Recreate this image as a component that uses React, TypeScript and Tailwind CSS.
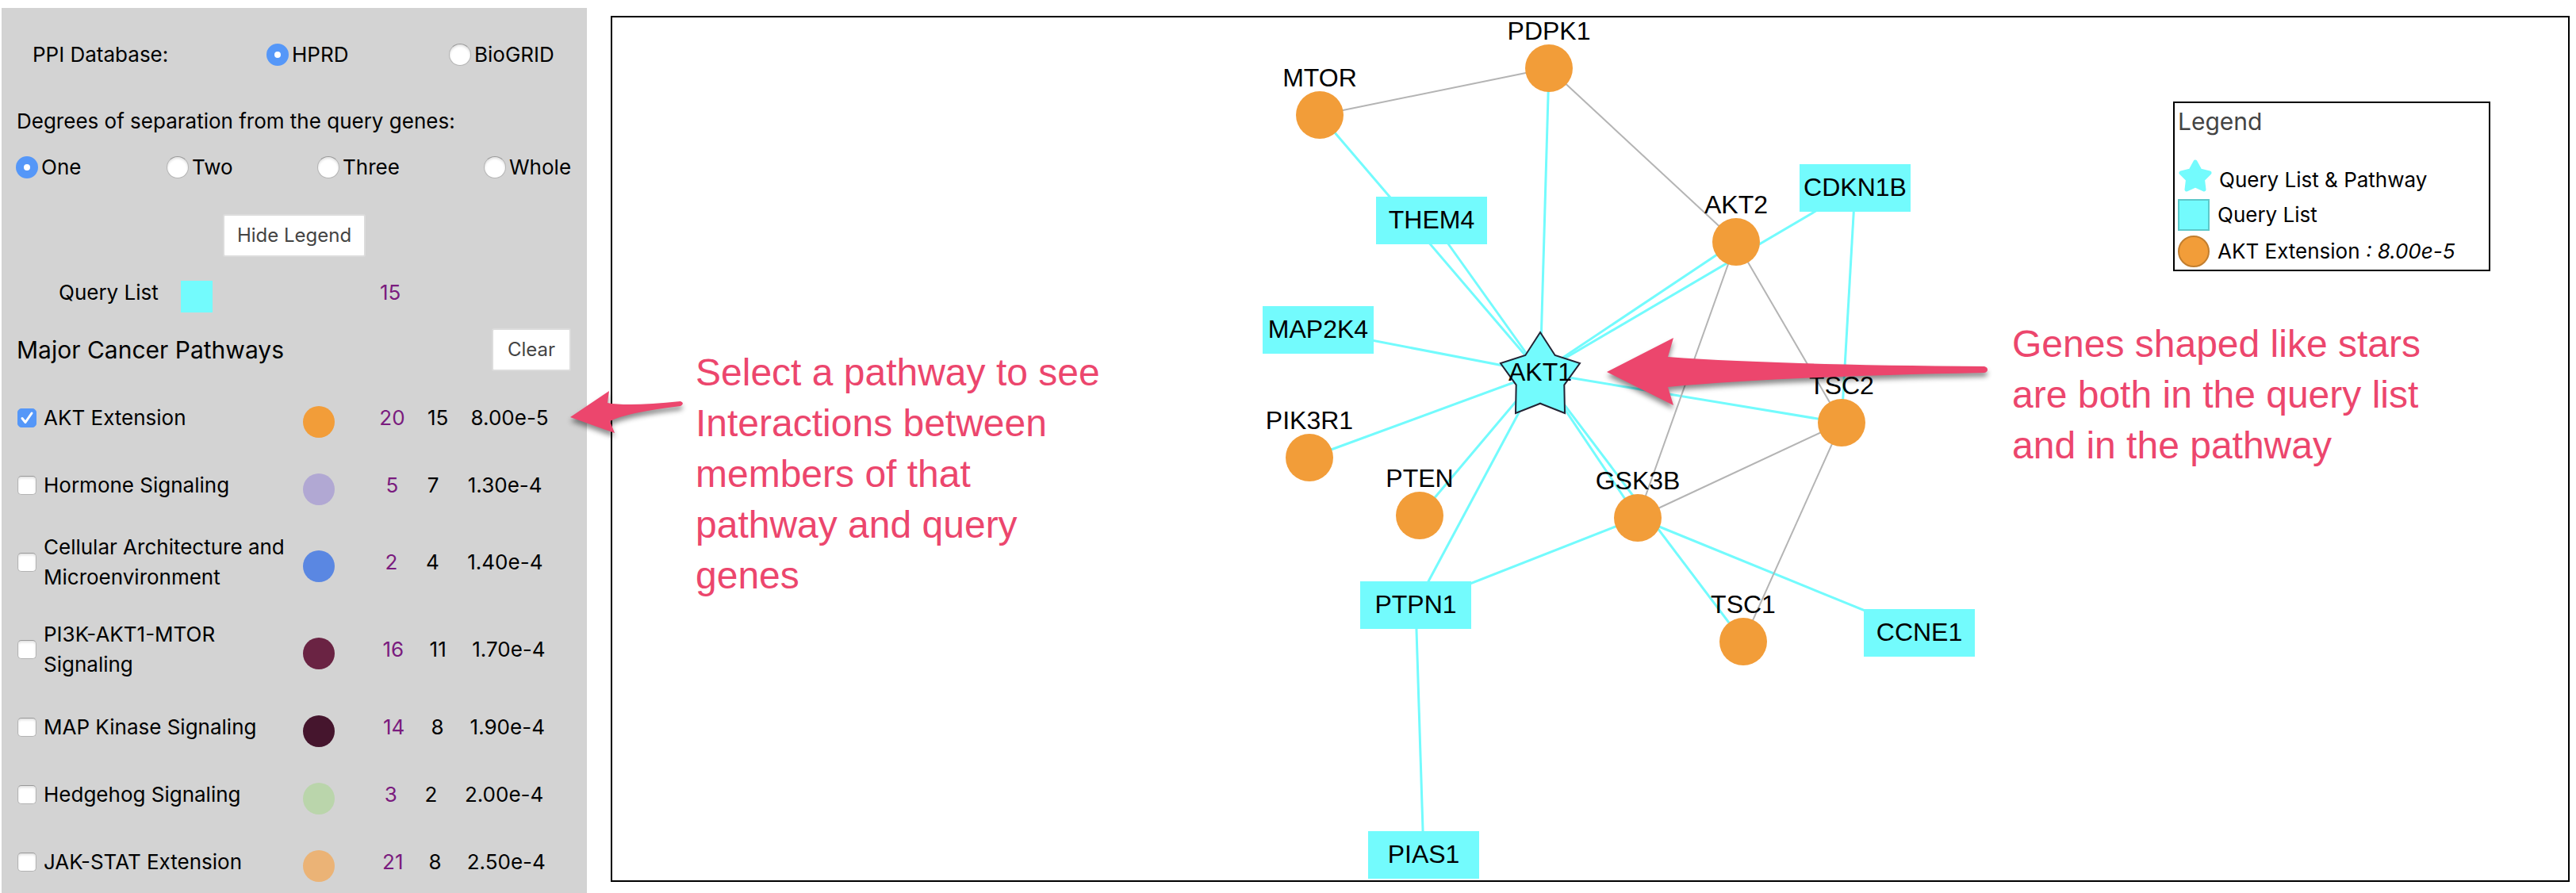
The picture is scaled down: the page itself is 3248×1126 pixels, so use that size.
import { useState } from 'react';
import { Check } from 'lucide-react';

type Pathway = {
  name: string;
  swatch: string;
  genes: number;
  hits: number;
  p: string;
  twoLines?: boolean;
};

const pathways: Pathway[] = [
  { name: 'AKT Extension', swatch: 'bg-[#f29d39]', genes: 20, hits: 15, p: '8.00e-5' },
  { name: 'Hormone Signaling', swatch: 'bg-[#b1a8d3]', genes: 5, hits: 7, p: '1.30e-4' },
  { name: 'Cellular Architecture and Microenvironment', swatch: 'bg-[#5a87e2]', genes: 2, hits: 4, p: '1.40e-4', twoLines: true },
  { name: 'PI3K-AKT1-MTOR Signaling', swatch: 'bg-[#6a2343]', genes: 16, hits: 11, p: '1.70e-4', twoLines: true },
  { name: 'MAP Kinase Signaling', swatch: 'bg-[#45152d]', genes: 14, hits: 8, p: '1.90e-4' },
  { name: 'Hedgehog Signaling', swatch: 'bg-[#bad5ab]', genes: 3, hits: 2, p: '2.00e-4' },
  { name: 'JAK-STAT Extension', swatch: 'bg-[#ebb376]', genes: 21, hits: 8, p: '2.50e-4' },
];

type Gene = { x: number; y: number; kind: 'circle' | 'box' | 'star' };

const genes: Record<string, Gene> = {
  PDPK1: { x: 1181, y: 64, kind: 'circle' },
  MTOR: { x: 892, y: 123, kind: 'circle' },
  THEM4: { x: 1033, y: 256, kind: 'box' },
  AKT2: { x: 1417, y: 283, kind: 'circle' },
  CDKN1B: { x: 1567, y: 215, kind: 'box' },
  MAP2K4: { x: 890, y: 394, kind: 'box' },
  AKT1: { x: 1170, y: 448, kind: 'star' },
  TSC2: { x: 1550, y: 511, kind: 'circle' },
  PIK3R1: { x: 879, y: 555, kind: 'circle' },
  PTEN: { x: 1018, y: 628, kind: 'circle' },
  GSK3B: { x: 1293, y: 631, kind: 'circle' },
  PTPN1: { x: 1013, y: 741, kind: 'box' },
  TSC1: { x: 1426, y: 787, kind: 'circle' },
  CCNE1: { x: 1648, y: 776, kind: 'box' },
  PIAS1: { x: 1023, y: 1056, kind: 'box' },
};

const pathwayEdges = [
  ['MTOR', 'PDPK1'],
  ['PDPK1', 'AKT2'],
  ['AKT2', 'GSK3B'],
  ['AKT2', 'TSC2'],
  ['TSC2', 'GSK3B'],
  ['TSC2', 'TSC1'],
];

const queryEdges = [
  ['MTOR', 'AKT1'],
  ['THEM4', 'AKT1'],
  ['PDPK1', 'AKT1'],
  ['AKT2', 'AKT1'],
  ['CDKN1B', 'AKT1'],
  ['CDKN1B', 'TSC2'],
  ['MAP2K4', 'AKT1'],
  ['PIK3R1', 'AKT1'],
  ['PTEN', 'AKT1'],
  ['PTPN1', 'AKT1'],
  ['GSK3B', 'AKT1'],
  ['TSC1', 'AKT1'],
  ['TSC2', 'AKT1'],
  ['PTPN1', 'GSK3B'],
  ['PTPN1', 'PIAS1'],
  ['GSK3B', 'CCNE1'],
];

function Radio({ name, label, defaultChecked }: { name: string; label: string; defaultChecked?: boolean }) {
  return (
    <label className="flex items-center gap-1">
      <input
        type="radio"
        name={name}
        defaultChecked={defaultChecked}
        className="size-7 shrink-0 appearance-none rounded-full border border-[#b4b4b4] border-t-[#999] bg-white shadow-[inset_0_2px_3px_rgba(0,0,0,0.12)] checked:border-[10px] checked:border-[#5597f8] checked:shadow-none"
      />
      {label}
    </label>
  );
}

function PathwayRow({ row }: { row: Pathway }) {
  const [checked, setChecked] = useState(row.name === 'AKT Extension');
  return (
    <tr className={`flex items-center pr-5 ${row.twoLines ? 'h-[110px]' : 'h-[85px]'}`}>
      <td className="w-[360px]">
        <label className="flex items-center gap-[9px]">
          <span className="grid size-6 shrink-0 place-items-center">
            <input
              type="checkbox"
              checked={checked}
              onChange={(e) => setChecked(e.target.checked)}
              className="col-start-1 row-start-1 size-6 appearance-none rounded-[5px] border border-[#b4b4b4] border-t-[#999] bg-white shadow-[inset_0_2px_3px_rgba(0,0,0,0.12)] checked:border-[#5597f8] checked:bg-[#5597f8] checked:shadow-none"
            />
            {checked && (
              <svg viewBox="0 0 24 24" className="pointer-events-none col-start-1 row-start-1 size-6" aria-hidden="true">
                <path d="M6 12.500 L10 17.500 L18 6" fill="none" stroke="white" strokeWidth="3" strokeLinecap="round" strokeLinejoin="round" />
              </svg>
            )}
          </span>
          {row.name}
        </label>
      </td>
      <td className="w-[68px] pt-[10px]">
        <div className={`size-10 rounded-full ${row.swatch}`} />
      </td>
      <td className="mx-auto">
        <a href="#genes" className="text-[#7a1b7e]">{row.genes}</a>
      </td>
      <td className="mr-auto">{row.hits}</td>
      <td className="mr-auto">{row.p}</td>
    </tr>
  );
}

function Sidebar() {
  return (
    <aside className="mt-[10px] ml-[2px] flex w-[738px] shrink-0 flex-col bg-[#d3d3d3] pt-10">
      <div role="radiogroup" aria-label="PPI Database" className="grid grid-cols-[295px_230px_1fr] pl-[39px]">
        <span>PPI Database:</span>
        <Radio name="database" label="HPRD" defaultChecked />
        <Radio name="database" label="BioGRID" />
      </div>

      <p className="mt-[46px] pl-[19px]">Degrees of separation from the query genes:</p>
      <div role="radiogroup" aria-label="Degrees of separation" className="mt-5 grid grid-cols-[190px_190px_210px_1fr] pl-[18px]">
        <Radio name="degree" label="One" defaultChecked />
        <Radio name="degree" label="Two" />
        <Radio name="degree" label="Three" />
        <Radio name="degree" label="Whole" />
      </div>

      <button type="button" className="mt-10 h-[54px] w-[180px] self-center rounded-[3px] border-2 border-[#dcdcdc] bg-white text-[24px] text-[#444]">
        Hide Legend
      </button>

      <div className="mt-[26px] grid grid-cols-[154px_251px_1fr] pl-[72px]">
        <span>Query List</span>
        <span className="mt-1 size-10 bg-[#73fbfd]" />
        <a href="#query" className="text-[#7a1b7e]">15</a>
      </div>

      <div className="mt-5 flex items-center justify-between pr-5 pl-[19px]">
        <h2 className="text-[30px]">Major Cancer Pathways</h2>
        <button type="button" className="h-[54px] w-[100px] rounded-[3px] border-2 border-[#dcdcdc] bg-white text-[24px] text-[#444]">
          Clear
        </button>
      </div>

      <table className="mt-4 block pl-5">
        <tbody className="block">
          {pathways.map((row) => (
            <PathwayRow key={row.name} row={row} />
          ))}
        </tbody>
      </table>
    </aside>
  );
}

function Edge({ ends, className }: { ends: string[]; className: string }) {
  const [a, b] = ends.map((n) => genes[n]);
  return <line x1={a.x} y1={a.y} x2={b.x} y2={b.y} className={className} />;
}

function Network() {
  return (
    <svg viewBox="0 0 2466 1088" className="block w-full font-['Liberation_Sans',Arial,sans-serif] text-[32px]" role="img" aria-label="Gene interaction network">
      {queryEdges.map((e) => (
        <Edge key={e.join()} ends={e} className="stroke-[#73fbfd] stroke-3" />
      ))}
      {pathwayEdges.map((e) => (
        <Edge key={e.join()} ends={e} className="stroke-[#b4b4b4] stroke-2" />
      ))}
      {Object.entries(genes).map(([name, g]) => (
        <g key={name} transform={`translate(${g.x} ${g.y})`}>
          {g.kind === 'circle' && <circle r="30" fill="#f29d39" />}
          {g.kind === 'box' && <rect x="-70" y="-30" width="140" height="60" fill="#73fbfd" />}
          {g.kind === 'star' && (
            <path
              d="M0 -51 L18.7 -22 L50 -12 L30.3 15.3 L31 51 L0 38.7 L-31 51 L-30.3 15.3 L-50 -12 L-18.7 -22 Z"
              fill="#73fbfd"
              stroke="#223"
              strokeWidth="2"
            />
          )}
          <text y={g.kind === 'circle' ? -36 : 10} textAnchor="middle">{name}</text>
        </g>
      ))}
    </svg>
  );
}

function Legend() {
  return (
    <section className="absolute top-[106px] right-[98px] w-[400px] border-2 border-black bg-white pl-1">
      <h3 className="h-[70px] text-[30px] leading-[46px] text-[#444]">Legend</h3>
      <ul>
        <li className="flex h-12 gap-2">
          <svg viewBox="0 0 44 42" className="h-[42px] w-[44px]" aria-hidden="true">
            <path
              d="M22 4 L28 15 L40 18 L31.500 26.500 L33 39 L22 34 L11 39 L12.500 26.500 L4 18 L16 15 Z"
              fill="#73fbfd"
              stroke="#73fbfd"
              strokeWidth="5"
              strokeLinejoin="round"
            />
          </svg>
          <span className="mt-2">Query List &amp; Pathway</span>
        </li>
        <li className="flex h-[46px] items-center gap-[10px]">
          <span className="size-10 border-2 border-[#5cc9ca] bg-[#73fbfd]" />
          Query List
        </li>
        <li className="flex h-[46px] items-center gap-[10px]">
          <span className="size-10 rounded-full border-2 border-[#c27e2e] bg-[#f29d39]" />
          <span>AKT Extension <i>: 8.00e-5</i></span>
        </li>
      </ul>
    </section>
  );
}

function Annotations() {
  return (
    <div className="font-['Liberation_Sans',Arial,sans-serif] text-[48px] leading-16 text-[#ec466d]">
      <svg viewBox="0 0 148 64" className="absolute top-[466px] -left-[55px] h-16 w-[148px] overflow-visible drop-shadow-[0_5px_3px_rgba(0,0,0,0.45)]" aria-hidden="true">
        <path
          d="M2 38 L51 5 L49 20 Q75 25 141 18 Q144 19 144 21 Q143 23 141 24 Q74 32 52 43 L58 58 Z"
          fill="#ec466d"
        />
      </svg>
      <p className="absolute top-[416px] left-[105px] w-[520px]">
        Select a pathway to see Interactions between members of that pathway and query genes
      </p>
      <svg viewBox="0 0 484 90" className="absolute top-[402px] left-[50.8%] h-[90px] w-[484px] overflow-visible drop-shadow-[0_5px_3px_rgba(0,0,0,0.45)]" aria-hidden="true">
        <path
          d="M1 45 L85 2 L78 26 Q214 36 477 38 Q481 39 481 42 Q481 45 477 46 Q214 51 78 64 L85 87 Z"
          fill="#ec466d"
        />
      </svg>
      <p className="absolute top-[380px] right-[171px] w-[530px]">
        Genes shaped like stars are both in the query list and in the pathway
      </p>
    </div>
  );
}

export default function App() {
  return (
    <div className="flex min-h-screen items-stretch bg-white font-[Inter,sans-serif] text-[26px] leading-[38px] text-black">
      <Sidebar />
      <main className="relative mt-5 mr-2 mb-[14px] ml-[30px] min-w-0 flex-1 self-start border-2 border-black">
        <Network />
        <Legend />
        <Annotations />
      </main>
    </div>
  );
}
